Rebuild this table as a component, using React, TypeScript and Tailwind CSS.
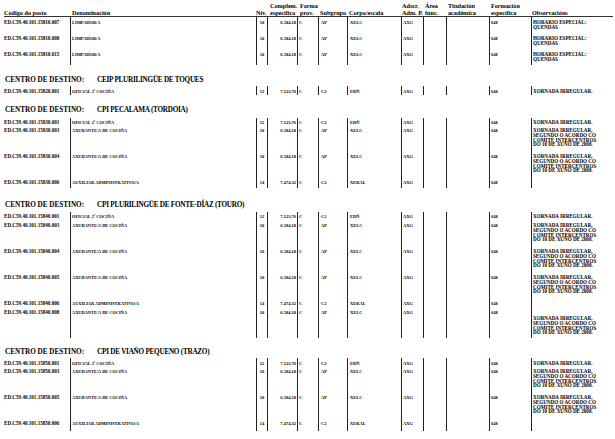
import React from "react";

type Row = {
  code: string;
  den: string;
  niv: string;
  comp: string;
  sub: string;
  corpo: string;
  obs: string[];
  h: number;
  obsTop?: number;
};

const OFICIAL = { den: "OFICIAL 2ª COCIÑA", niv: "12", comp: "7.123,76", sub: "C2", corpo: "EDÑ", obs: ["XORNADA IRREGULAR."] };
const AXUD = {
  den: "AXUDANTE/A DE COCIÑA",
  niv: "10",
  comp: "6.584,18",
  sub: "AP",
  corpo: "XELC",
  obs: ["XORNADA IRREGULAR,", "SEGUNDO O ACORDO CO", "COMITÉ INTERCENTROS", "DO 10 DE XUÑO DE 2008."],
};
const AUX = { den: "AUXILIAR ADMINISTRATIVO/A", niv: "14", comp: "7.474,32", sub: "C2", corpo: "XERAL", obs: [] as string[] };
const LIMP = { den: "LIMPADOR/A", niv: "10", comp: "6.584,18", sub: "AP", corpo: "XELC", obs: ["HORARIO ESPECIAL:", "QUENDAS"] };

// mt / titleH tuned per section so titles and rows land where the scan has them
const sections: { name?: string; mt: number; titleH: number; rows: Row[] }[] = [
  {
    mt: 0,
    titleH: 0,
    rows: [
      { code: "ED.C59.40.101.15810.007", ...LIMP, h: 16 },
      { code: "ED.C59.40.101.15810.008", ...LIMP, h: 16 },
      { code: "ED.C59.40.101.15810.015", ...LIMP, h: 16 },
    ],
  },
  {
    name: "CEIP PLURILINGÜE DE TOQUES",
    mt: 9.5,
    titleH: 11.5,
    rows: [{ code: "ED.C59.40.101.15820.001", ...OFICIAL, h: 9 }],
  },
  {
    name: "CPI PECALAMA (TORDOIA)",
    mt: 9.5,
    titleH: 13,
    rows: [
      { code: "ED.C59.40.101.15830.001", ...OFICIAL, h: 8 },
      { code: "ED.C59.40.101.15830.003", ...AXUD, h: 26 },
      { code: "ED.C59.40.101.15830.004", ...AXUD, h: 26 },
      { code: "ED.C59.40.101.15830.006", ...AUX, h: 10 },
    ],
  },
  {
    name: "CPI PLURILINGÜE DE FONTE-DÍAZ (TOURO)",
    mt: 12,
    titleH: 12,
    rows: [
      { code: "ED.C59.40.101.15840.001", ...OFICIAL, h: 9 },
      { code: "ED.C59.40.101.15840.003", ...AXUD, h: 26 },
      { code: "ED.C59.40.101.15840.004", ...AXUD, h: 26 },
      { code: "ED.C59.40.101.15840.005", ...AXUD, h: 26 },
      { code: "ED.C59.40.101.15840.006", ...AUX, h: 9 },
      { code: "ED.C59.40.101.15840.008", ...AXUD, h: 30, obsTop: 6 },
    ],
  },
  {
    name: "CPI DE VIAÑO PEQUENO (TRAZO)",
    mt: 9.5,
    titleH: 11,
    rows: [
      { code: "ED.C59.40.101.15850.001", ...OFICIAL, h: 8.5 },
      { code: "ED.C59.40.101.15850.003", ...AXUD, h: 26 },
      { code: "ED.C59.40.101.15850.005", ...AXUD, h: 26 },
      { code: "ED.C59.40.101.15850.006", ...AUX, h: 12 },
    ],
  },
];

function Header() {
  return (
    <div className="flex h-[17px] border-b border-[#333] pt-[1px] text-[6.2px] leading-[7px] whitespace-nowrap">
      <div className="w-[66px] shrink-0 flex flex-col justify-end">
        <span>Código do posto</span>
      </div>
      <div className="w-[186px] shrink-0 flex flex-col justify-end pl-[2px]">
        <span>Denominación</span>
      </div>
      <div className="w-[11px] shrink-0 flex flex-col justify-end">
        <span>Niv.</span>
      </div>
      <div className="w-[30px] shrink-0 flex flex-col justify-end pl-[3px]">
        <span>Complem.</span>
        <span>específico</span>
      </div>
      <div className="w-[21px] shrink-0 flex flex-col justify-end pl-[3px]">
        <span>Forma</span>
        <span>prov.</span>
      </div>
      <div className="w-[29px] shrink-0 flex flex-col justify-end pl-[2px]">
        <span>Subgrupo</span>
      </div>
      <div className="w-[54px] shrink-0 flex flex-col justify-end pl-[2px]">
        <span>Corpo/escala</span>
      </div>
      <div className="w-[22px] shrink-0 flex flex-col justify-end pl-[1px]">
        <span>Adscr.</span>
        <span>Adm. P.</span>
      </div>
      <div className="w-[23px] shrink-0 flex flex-col justify-end pl-[2px]">
        <span>Área</span>
        <span>func.</span>
      </div>
      <div className="w-[43px] shrink-0 flex flex-col justify-end pl-[2px]">
        <span>Titulación</span>
        <span>académica</span>
      </div>
      <div className="w-[42px] shrink-0 flex flex-col justify-end pl-[2px]">
        <span>Formación</span>
        <span>específica</span>
      </div>
      <div className="w-[82px] shrink-0 flex flex-col justify-end pl-[1px]">
        <span>Observacións</span>
      </div>
    </div>
  );
}

function DataRow({ r }: { r: Row }) {
  return (
    <div className="flex text-[4.5px] leading-[5px] whitespace-nowrap" style={{ height: r.h }}>
      <div className="w-[66px] shrink-0 pt-[2.5px] text-[5.1px]">{r.code}</div>
      <div className="w-[186px] shrink-0 border-l border-[#222] pl-[1px] pt-[2.5px] text-[4.4px]">{r.den}</div>
      <div className="w-[11px] shrink-0 border-l border-[#222] pt-[2.5px] text-center">{r.niv}</div>
      <div className="w-[30px] shrink-0 border-l border-[#222] pr-[1px] pt-[2.5px] text-right">{r.comp}</div>
      <div className="w-[21px] shrink-0 border-l border-[#222] pl-[1px] pt-[2.5px]">C</div>
      <div className="w-[29px] shrink-0 border-l border-[#222] pl-[2px] pt-[2.5px]">{r.sub}</div>
      <div className="w-[54px] shrink-0 border-l border-[#222] pl-[2px] pt-[2.5px]">{r.corpo}</div>
      <div className="w-[22px] shrink-0 border-l border-[#222] pl-[1px] pt-[2.5px]">AXG</div>
      <div className="w-[23px] shrink-0 border-l border-[#222]" />
      <div className="w-[43px] shrink-0 border-l border-[#222]" />
      <div className="w-[42px] shrink-0 border-l border-[#222] pl-[1px] pt-[2.5px]">648</div>
      <div
        className={
          r.obs.length === 2
            ? "w-[82px] shrink-0 border-l border-[#222] pl-[1px] pt-[2.5px] text-[5.1px] leading-[5.8px]"
            : "w-[82px] shrink-0 border-l border-[#222] pl-[1px] pt-[2.5px] text-[5.1px] leading-[4.8px]"
        }
      >
        {r.obsTop ? <div className="h-[6px]" /> : null}
        {r.obs.map((l) => (
          <div key={l}>{l}</div>
        ))}
      </div>
    </div>
  );
}

export default function App() {
  return (
    <div className="w-[615px] h-[439px] overflow-hidden bg-white text-black font-bold pl-[4px] pr-[2px] font-[Liberation_Serif,Times_New_Roman,serif]">
      <Header />
      {sections.map((s, i) => (
        <div key={i} style={{ marginTop: s.mt }}>
          {s.name ? (
            <div className="flex pl-[1px] text-[7.2px] leading-[11px] whitespace-nowrap" style={{ height: s.titleH }}>
              <span>CENTRO DE DESTINO:</span>
              <span className="ml-[13px] tracking-[-0.25px]">{s.name}</span>
            </div>
          ) : null}
          {s.rows.map((r) => (
            <DataRow key={r.code} r={r} />
          ))}
        </div>
      ))}
    </div>
  );
}
